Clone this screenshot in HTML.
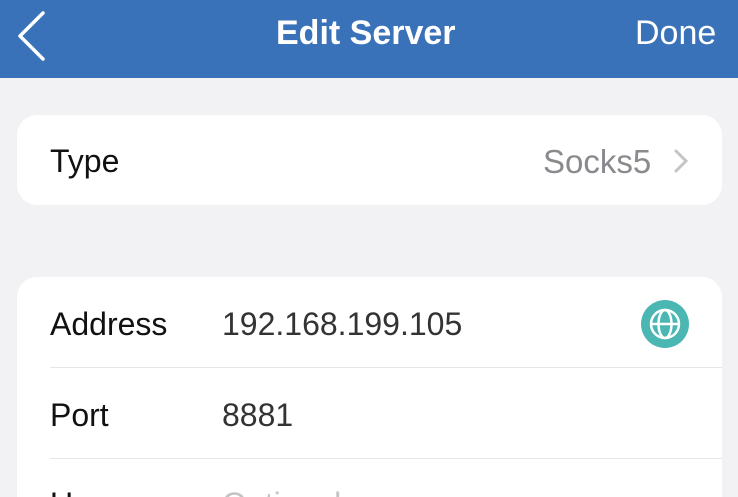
<!DOCTYPE html>
<html style="overflow:hidden;height:497px"><head><style>
body{margin:0;width:738px;height:497px;overflow:hidden;background:#f2f2f5;font-family:"Liberation Sans",sans-serif}
#w{position:relative;width:738px;height:497px;overflow:hidden}
.hdr{position:absolute;left:0;top:0;width:738px;height:78px;background:#3a72b9;color:#fff}
.t{position:absolute;font-size:32px;white-space:nowrap}
.card{position:absolute;left:17px;width:705px;background:#fff;border-radius:20px}
.line{position:absolute;left:50px;right:0;height:1px;background:#e6e6e8}
</style></head><body><div id="w">
<div class="hdr">
<svg style="position:absolute;left:14px;top:10px" width="34" height="52"><path d="M29 3 L6 26 L29 49" stroke="#fff" stroke-width="3.5" fill="none" stroke-linecap="round" stroke-linejoin="round"/></svg>
<div class="t" style="left:276px;top:14px;font-weight:bold;font-size:34px">Edit Server</div>
<div class="t" style="left:635px;top:14px;font-size:34px">Done</div>
</div>
<div class="card" style="top:115px;height:90px"></div>
<div class="t" style="left:50px;top:143px;color:#111">Type</div>
<div class="t" style="left:543px;top:143px;color:#8a8a8e;font-size:33px">Socks5</div>
<svg style="position:absolute;left:672px;top:148px" width="18" height="28"><path d="M4 3 L14 13 L4 23" stroke="#c4c4c7" stroke-width="3" fill="none" stroke-linecap="round"/></svg>
<div class="card" style="top:277px;height:220px;border-radius:20px 20px 0 0">
<div class="line" style="top:90px;left:33px"></div>
<div class="line" style="top:181px;left:33px"></div>
</div>
<div class="t" style="left:50px;top:306px;color:#111">Address</div>
<div class="t" style="left:222px;top:306px;color:#333">192.168.199.105</div>
<svg style="position:absolute;left:640px;top:299px" width="50" height="50"><circle cx="25" cy="25" r="24" fill="#4bb7b3"/><g stroke="#fff" stroke-width="2.5" fill="none"><circle cx="25" cy="25" r="14"/><ellipse cx="25" cy="25" rx="6.5" ry="14"/><line x1="11" y1="25" x2="39" y2="25"/></g></svg>
<div class="t" style="left:50px;top:397px;color:#111">Port</div>
<div class="t" style="left:222px;top:397px;color:#333">8881</div>
<div class="t" style="left:50px;top:486px;color:#111">Username</div>
<div class="t" style="left:222px;top:486px;color:#c4c4c7">Optional</div>
</div></body></html>
